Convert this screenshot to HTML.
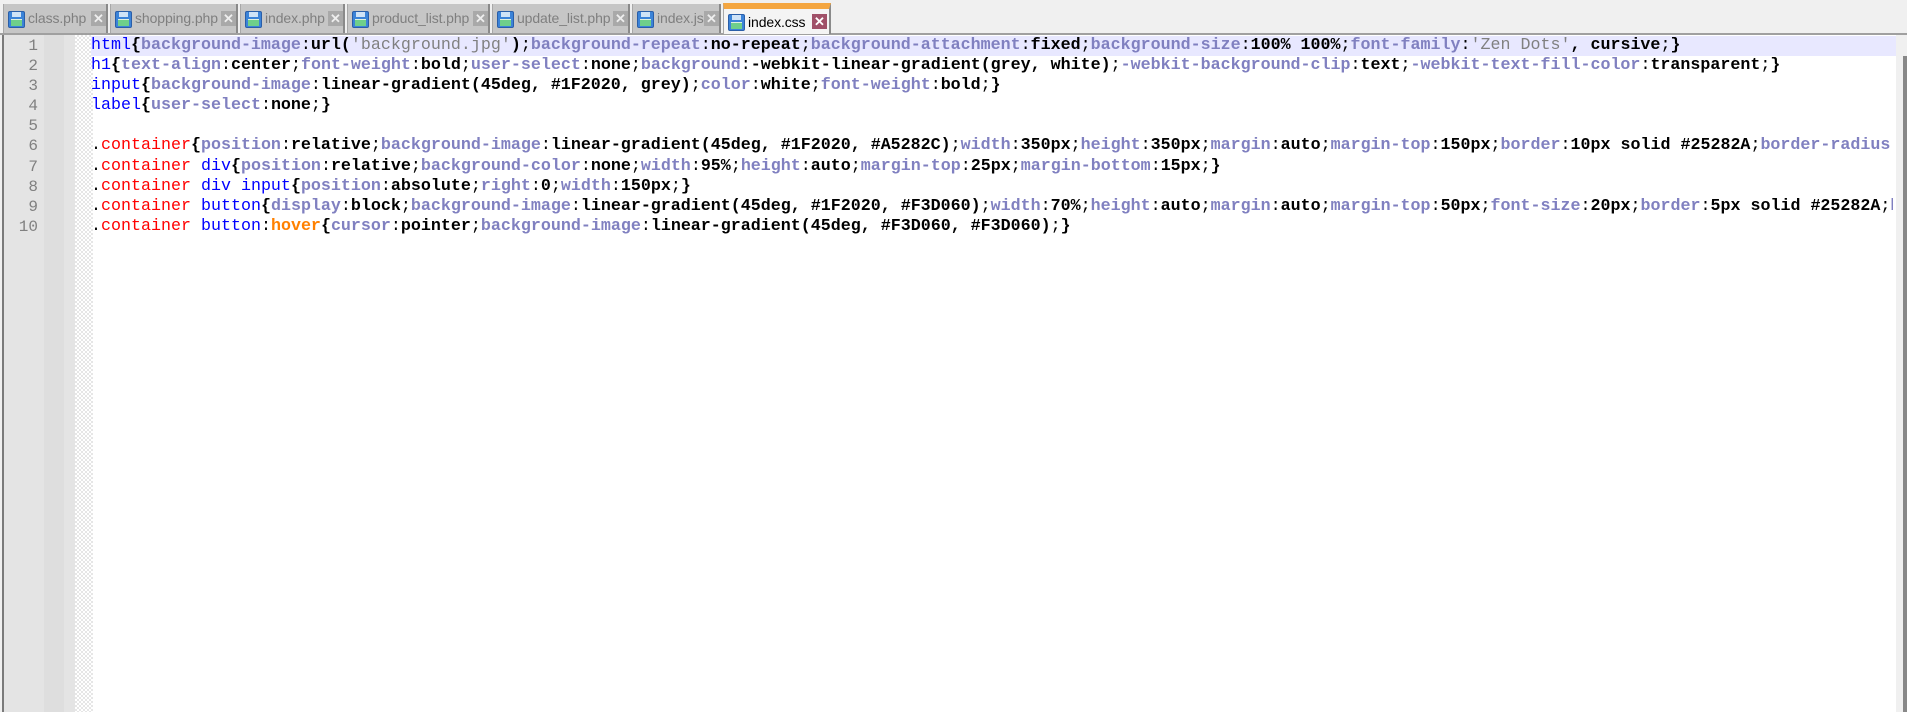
<!DOCTYPE html>
<html><head><meta charset="utf-8"><style>
*{margin:0;padding:0;box-sizing:border-box}
html,body{width:1907px;height:712px;overflow:hidden;background:#f0f0f0;font-family:"Liberation Sans",sans-serif}
.tabbar{position:absolute;left:0;top:0;width:1907px;height:35px;background:#f0f0f0;border-bottom:2px solid #a0a0a0}
.tab{position:absolute;top:4px;height:29px;background:#c6c6c6;border-left:1px solid #a8a8a8;border-right:2px solid #8a8a8a;color:#7f7f7f;font-size:14px;letter-spacing:-0.1px;line-height:29px;padding-left:24px;white-space:nowrap}
.tab.act{top:3px;height:31px;background:#f4f4f4;color:#000;border-top:6px solid #f4a640;line-height:26px}
.ic{position:absolute;left:4px;top:7px;width:17px;height:17px;background:#3b83d8;border:1px solid #2a5ea8;border-radius:2px}
.act .ic{top:5px}
.ic:before{content:"";position:absolute;left:3px;top:0;width:9px;height:5px;background:#cfe3f7}
.ic:after{content:"";position:absolute;left:2px;bottom:1px;width:11px;height:6px;background:#6fcf8a;border-top:1px solid #e0f0e0}
.x{position:absolute;top:7px;width:15px;height:15px;background:#a9a9a9;color:#eee;font-size:13px;line-height:15px;text-align:center;font-weight:bold;letter-spacing:0}
.act .x{top:5px;background:#a05068;color:#fff}
.ed{position:absolute;left:2px;top:35px;width:1894px;height:677px;background:#fff;border-left:2px solid #7a7a7a}
.g1{position:absolute;left:0;top:0;width:40px;height:100%;background:#e4e4e4}
.g2{position:absolute;left:40px;top:0;width:20px;height:100%;background:#dedede}
.g3{position:absolute;left:60px;top:0;width:11px;height:100%;background:#e4e4e4}
.g4{position:absolute;left:71px;top:0;width:18px;height:100%;background-color:#fff;background-image:repeating-conic-gradient(#e6e6e6 0 25%,#fff 0 50%);background-size:4px 4px}
.nums{position:absolute;left:0;top:1px;width:34px;text-align:right;font-family:"Liberation Mono",monospace;font-size:16px;line-height:20.1px;color:#808080}
.hl{position:absolute;left:87px;top:1px;width:1807px;height:20px;background:#e8e8ff}
.code{position:absolute;left:87px;top:1px;width:1802px;overflow:hidden;font-family:"Liberation Mono",monospace;font-size:16.66px;line-height:20.1px;white-space:pre;color:#000}
.p{color:#8080c0;font-weight:bold}.v{font-weight:bold}.s{color:#808080}.t{color:#0000ff}.c{color:#ff0000}.h{color:#ff8000;font-weight:bold}.b{font-weight:bold}
.sb{position:absolute;left:1896px;top:35px;width:11px;height:677px;background:#f0f0f0}
.th{position:absolute;left:1903px;top:56px;width:4px;height:656px;background:#888}
</style></head><body>
<div class="tabbar">
<div class="tab" style="left:3px;width:105px"><span class="ic"></span>class.php<span class="x" style="left:87px">✕</span></div>
<div class="tab" style="left:110px;width:128px"><span class="ic"></span>shopping.php<span class="x" style="left:110px">✕</span></div>
<div class="tab" style="left:240px;width:105px"><span class="ic"></span>index.php<span class="x" style="left:87px">✕</span></div>
<div class="tab" style="left:347px;width:143px"><span class="ic"></span>product_list.php<span class="x" style="left:125px">✕</span></div>
<div class="tab" style="left:492px;width:138px"><span class="ic"></span>update_list.php<span class="x" style="left:120px">✕</span></div>
<div class="tab" style="left:632px;width:89px"><span class="ic"></span>index.js<span class="x" style="left:71px">✕</span></div>
<div class="tab act" style="left:723px;width:108px"><span class="ic"></span>index.css<span class="x" style="left:88px">✕</span></div>
</div>
<div class="ed">
<div class="g1"></div><div class="g2"></div><div class="g3"></div><div class="g4"></div>
<div class="nums">1<br>2<br>3<br>4<br>5<br>6<br>7<br>8<br>9<br>10</div>
<div class="hl"></div>
<div class="code"><span class="t">html</span><span class="b">{</span><span class="p">background-image</span>:<span class="v">url</span><span class="b">(</span><span class="s">'background.jpg'</span><span class="b">)</span>;<span class="p">background-repeat</span>:<span class="v">no-repeat</span>;<span class="p">background-attachment</span>:<span class="v">fixed</span>;<span class="p">background-size</span>:<span class="v">100% 100%</span>;<span class="p">font-family</span>:<span class="s">'Zen Dots'</span><span class="v">, cursive</span>;<span class="b">}</span>
<span class="t">h1</span><span class="b">{</span><span class="p">text-align</span>:<span class="v">center</span>;<span class="p">font-weight</span>:<span class="v">bold</span>;<span class="p">user-select</span>:<span class="v">none</span>;<span class="p">background</span>:<span class="v">-webkit-linear-gradient(grey, white)</span>;<span class="p">-webkit-background-clip</span>:<span class="v">text</span>;<span class="p">-webkit-text-fill-color</span>:<span class="v">transparent</span>;<span class="b">}</span>
<span class="t">input</span><span class="b">{</span><span class="p">background-image</span>:<span class="v">linear-gradient(45deg, #1F2020, grey)</span>;<span class="p">color</span>:<span class="v">white</span>;<span class="p">font-weight</span>:<span class="v">bold</span>;<span class="b">}</span>
<span class="t">label</span><span class="b">{</span><span class="p">user-select</span>:<span class="v">none</span>;<span class="b">}</span>

.<span class="c">container</span><span class="b">{</span><span class="p">position</span>:<span class="v">relative</span>;<span class="p">background-image</span>:<span class="v">linear-gradient(45deg, #1F2020, #A5282C)</span>;<span class="p">width</span>:<span class="v">350px</span>;<span class="p">height</span>:<span class="v">350px</span>;<span class="p">margin</span>:<span class="v">auto</span>;<span class="p">margin-top</span>:<span class="v">150px</span>;<span class="p">border</span>:<span class="v">10px solid #25282A</span>;<span class="p">border-radius</span>:<span class="v">20px</span>;<span class="b">}</span>
.<span class="c">container</span> <span class="t">div</span><span class="b">{</span><span class="p">position</span>:<span class="v">relative</span>;<span class="p">background-color</span>:<span class="v">none</span>;<span class="p">width</span>:<span class="v">95%</span>;<span class="p">height</span>:<span class="v">auto</span>;<span class="p">margin-top</span>:<span class="v">25px</span>;<span class="p">margin-bottom</span>:<span class="v">15px</span>;<span class="b">}</span>
.<span class="c">container</span> <span class="t">div input</span><span class="b">{</span><span class="p">position</span>:<span class="v">absolute</span>;<span class="p">right</span>:<span class="v">0</span>;<span class="p">width</span>:<span class="v">150px</span>;<span class="b">}</span>
.<span class="c">container</span> <span class="t">button</span><span class="b">{</span><span class="p">display</span>:<span class="v">block</span>;<span class="p">background-image</span>:<span class="v">linear-gradient(45deg, #1F2020, #F3D060)</span>;<span class="p">width</span>:<span class="v">70%</span>;<span class="p">height</span>:<span class="v">auto</span>;<span class="p">margin</span>:<span class="v">auto</span>;<span class="p">margin-top</span>:<span class="v">50px</span>;<span class="p">font-size</span>:<span class="v">20px</span>;<span class="p">border</span>:<span class="v">5px solid #25282A</span>;<span class="p">border-radius</span>:<span class="v">10px</span>;<span class="b">}</span>
.<span class="c">container</span> <span class="t">button</span>:<span class="h">hover</span><span class="b">{</span><span class="p">cursor</span>:<span class="v">pointer</span>;<span class="p">background-image</span>:<span class="v">linear-gradient(45deg, #F3D060, #F3D060)</span>;<span class="b">}</span></div>
</div>
<div class="sb"></div><div class="th"></div>
</body></html>
